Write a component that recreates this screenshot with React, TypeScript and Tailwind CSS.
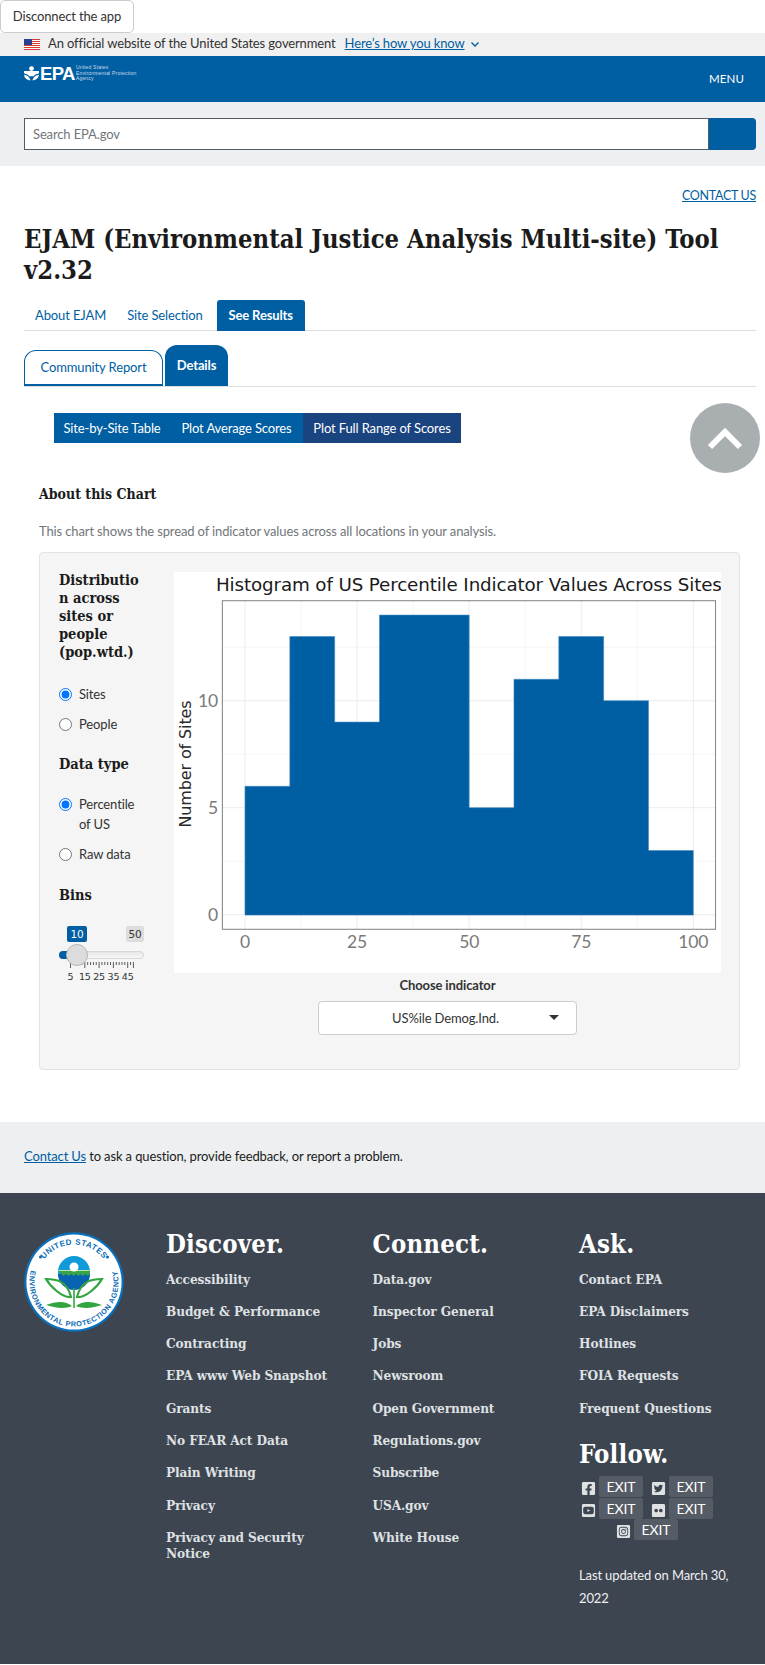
import React from "react";
import { FaFacebookSquare, FaTwitterSquare, FaYoutubeSquare, FaFlickr, FaInstagramSquare } from "react-icons/fa";

const serif = "font-['DejaVu_Serif_Condensed','DejaVu_Serif',serif] font-bold";

function Flag() {
  return (
    <svg width="16" height="11" viewBox="0 0 16 11" className="shrink-0">
      <rect width="16" height="11" fill="#fff" />
      {[0, 2, 4, 6, 8, 10].map((y) => (
        <rect key={y} y={y} width="16" height="1" fill="#d83933" />
      ))}
      <rect width="8" height="6" fill="#2a3f8f" />
    </svg>
  );
}

function EpaLogo() {
  return (
    <div className="flex items-center h-[18px]">
      <svg width="15" height="15" viewBox="0 0 15 15" className="shrink-0">
        <circle cx="7.5" cy="2.6" r="2.4" fill="#fff" />
        <path d="M0 5h15v1.4c0 1-1 1.4-2 1.6-1 .3-2.6 1-3.3 2.2h-4.4C4.600 9 3 8.300 2 8 1 7.800 0 7.400 0 6.400z" fill="#fff" />
        <path d="M0 8.800c2.600.2 5 1.600 6.700 5.500C3 14.500 .4 12 0 8.800zM15 8.800c-2.600.2-5 1.600-6.700 5.500C12 14.500 14.600 12 15 8.800z" fill="#fff" />
      </svg>
      <span className="ml-[1px] font-['Liberation_Sans',sans-serif] font-bold text-white text-[18.5px] leading-[18px] tracking-[-0.6px]">EPA</span>
      <span className="ml-[1px] font-['Liberation_Sans',sans-serif] text-[#c9dcec] text-[5px] leading-[5.400px] tracking-[0.2px]">
        United States
        <br />
        Environmental Protection
        <br />
        Agency
      </span>
    </div>
  );
}

function Seal() {
  return (
    <svg width="100" height="100" viewBox="0 0 100 100" className="shrink-0">
      <circle cx="50" cy="50" r="49.800" fill="#0a70bd" />
      <circle cx="50" cy="50" r="47.600" fill="#fff" />
      <defs>
        <path id="sealTop" d="M 12.500 50 A 37.500 37.500 0 0 1 87.500 50" />
        <path id="sealBot" d="M 11.500 27.750 A 44.500 44.500 0 1 0 88.500 27.750" />
      </defs>
      <text className="font-['Liberation_Sans',sans-serif] font-bold" fontSize="8" fill="#0a6cb5" letterSpacing="0.5" textAnchor="middle">
        <textPath href="#sealTop" startOffset="50%">UNITED STATES</textPath>
      </text>
      <text className="font-['Liberation_Sans',sans-serif] font-bold" fontSize="7.300" fill="#0a6cb5" letterSpacing="0.55" textAnchor="middle">
        <textPath href="#sealBot" startOffset="50%">ENVIRONMENTAL PROTECTION AGENCY</textPath>
      </text>
      <circle cx="16.500" cy="25" r="1.500" fill="#0a6cb5" />
      <circle cx="83.500" cy="25" r="1.500" fill="#0a6cb5" />
      <circle cx="50" cy="40" r="16" fill="#0f9ad9" />
      <path d="M34 42h32a16 16 0 0 1-32 0z" fill="#0a63b0" />
      <path d="M34.200 38.500h31.600l.2 3-2 2.500-2.500-2-2.500 2-2.500-2-2.500 2-2-2-2.500 2-2.500-2-2.500 2-2.500-2-2.500 2-2.200-2.500z" fill="#3aa447" />
      <rect x="34.300" y="38" width="31.400" height="1" fill="#bfe3a8" />
      <circle cx="50" cy="35" r="4.500" fill="#fff" />
      <path d="M49.200 56h1.600v20h-1.600z" fill="#33a540" />
      <path d="M47 65C38 66 26 54 22 47c9 0 21 1 25 18zM53 65c9 1 21-11 25-18-9 0-21 1-25 18z" fill="none" stroke="#33a540" strokeWidth="2.200" />
      <path d="M48 74c-6-5-15-5-26-1 7 2 17 5 26 1zM52 74c6-5 15-5 26-1-7 2-17 5-26 1z" fill="#33a540" />
    </svg>
  );
}

function Chart() {
  const bars = [6, 13, 9, 14, 14, 5, 11, 13, 10, 3];
  const px = (v: number) => 71 + v * 4.483;
  const py = (v: number) => 342.7 - v * 21.4;
  let d = `M${px(0)} ${py(0)}`;
  bars.forEach((b, i) => {
    d += `L${px(i * 10)} ${py(b)}L${px((i + 1) * 10)} ${py(b)}`;
  });
  d += `L${px(100)} ${py(0)}Z`;
  return (
    <svg width="547" height="401" viewBox="0 0 547 401" className="block bg-white">
      {[12.5, 37.5, 62.5, 87.5].map((v) => (
        <line key={v} x1={px(v)} x2={px(v)} y1="28.700" y2="357.300" stroke="#f4f4f4" />
      ))}
      {[2.5, 7.5, 12.5].map((v) => (
        <line key={v} y1={py(v)} y2={py(v)} x1="48.400" x2="541.500" stroke="#f4f4f4" />
      ))}
      {[0, 25, 50, 75, 100].map((v) => (
        <line key={v} x1={px(v)} x2={px(v)} y1="28.700" y2="357.300" stroke="#ececec" />
      ))}
      {[0, 5, 10].map((v) => (
        <line key={v} y1={py(v)} y2={py(v)} x1="48.400" x2="541.500" stroke="#ececec" />
      ))}
      <path d={d} fill="#005ea2" stroke="#3f8ac2" strokeWidth="0.600" />
      <path d={`M${px(0)} ${py(0)}H${px(100)}`} stroke="#005ea2" strokeWidth="1" />
      <rect x="48.400" y="28.700" width="493.100" height="328.600" fill="none" stroke="#8c8c8c" strokeWidth="1.100" />
      <text x="42" y="19" fontSize="18.300" fill="#1a1a1a" className="font-['DejaVu_Sans',sans-serif]">Histogram of US Percentile Indicator Values Across Sites</text>
      <text transform="translate(16.500 192) rotate(-90)" textAnchor="middle" fontSize="16" fill="#2a2a2a" className="font-['DejaVu_Sans',sans-serif]">Number of Sites</text>
      {[0, 25, 50, 75, 100].map((v) => (
        <text key={v} x={px(v)} y="375.500" textAnchor="middle" fontSize="17.500" fill="#7a7a7a" className="font-['Lato',sans-serif]">{v}</text>
      ))}
      {[0, 5, 10].map((v) => (
        <text key={v} x="44" y={py(v) + 6} textAnchor="end" fontSize="17.500" fill="#7a7a7a" className="font-['Lato',sans-serif]">{v}</text>
      ))}
    </svg>
  );
}

function Radio({ label, checked, name }: { label: React.ReactNode; checked?: boolean; name: string }) {
  return (
    <label className="flex items-start text-[13px] tracking-[-0.13px] leading-[20px] text-[#333]">
      <input type="radio" name={name} defaultChecked={checked} className="w-[13px] h-[13px] mt-[4px] ml-0 mr-[7px] shrink-0" />
      <span>{label}</span>
    </label>
  );
}

function Slider() {
  const ticks = Array.from({ length: 23 }, (_, i) => i);
  return (
    <div className="w-[90px] mt-[21px]">
      <div className="flex justify-between w-[85px] pl-[8px] h-[16px]">
        <span className="w-[20px] h-[16px] bg-[#005ea2] rounded-[2px] text-white text-[10.500px] leading-[16px] text-center font-['DejaVu_Sans',sans-serif]">10</span>
        <span className="w-[18px] h-[16px] bg-[#dddddd] rounded-[2px] text-[#333] text-[10.500px] leading-[16px] text-center font-['DejaVu_Sans',sans-serif]">50</span>
      </div>
      <div className="relative w-[85px] h-[8px] mt-[9px] rounded-[4px] border border-[#d8d8d8] bg-gradient-to-b from-[#e6e6e6] to-[#f8f8f8]">
        <div className="absolute -left-px -top-px w-[16px] h-[8px] rounded-l-[4px] bg-[#005ea2]" />
        <div className="absolute left-[6px] top-[-8px] w-[22px] h-[22px] rounded-full bg-[#dcdcdc] border border-[#b5b5b5]" />
      </div>
      <svg width="90" height="24" viewBox="0 0 90 24" className="block mt-[2px]">
        {ticks.map((i) => {
          const x = 11.500 + i * 2.860;
          const major = i % 5 === 0 || i === 22;
          return <line key={i} x1={x} x2={x} y1="1" y2={major ? 7 : 4} stroke="#333" strokeWidth="0.800" />;
        })}
        {[5, 15, 25, 35, 45].map((v, i) => (
          <text key={v} x={11.500 + i * 14.300} y="19" textAnchor="middle" fontSize="9.500" fill="#333" className="font-['DejaVu_Sans',sans-serif]">{v}</text>
        ))}
      </svg>
    </div>
  );
}

const discover = ["Accessibility", "Budget & Performance", "Contracting", "EPA www Web Snapshot", "Grants", "No FEAR Act Data", "Plain Writing", "Privacy", "Privacy and Security Notice"];
const connect = ["Data.gov", "Inspector General", "Jobs", "Newsroom", "Open Government", "Regulations.gov", "Subscribe", "USA.gov", "White House"];
const ask = ["Contact EPA", "EPA Disclaimers", "Hotlines", "FOIA Requests", "Frequent Questions"];

function LinkCol({ title, links, width }: { title: string; links: string[]; width: string }) {
  return (
    <div className={width}>
      <h2 className={`${serif} text-white text-[25.500px] leading-[30px] tracking-[0.2px]`}>{title}</h2>
      <ul className="mt-[12px] flex flex-col gap-[16.300px]">
        {links.map((l) => (
          <li key={l} className={`${serif} text-[#dfe1e2] text-[13.500px] tracking-[-0.1px] leading-[16px] pr-[30px]`}>{l}</li>
        ))}
      </ul>
    </div>
  );
}

function Exit() {
  return <span className="w-[44px] h-[21px] rounded-[2px] bg-[#565c65] text-white text-[14px] tracking-[-0.13px] leading-[21px] text-center">EXIT</span>;
}

export default function App() {
  return (
    <div className="w-[765px] min-h-[1665px] bg-white font-['Lato',sans-serif] text-[13px] tracking-[-0.13px] text-[#1b1b1b]">
      <button className="block w-[134px] h-[32.500px] bg-white border border-[#cccccc] rounded-[5px] text-[13px] tracking-[-0.13px] text-[#333]">Disconnect the app</button>
      <div className="h-[23px] bg-[#f0f0f0] flex items-center pl-[24px]">
        <Flag />
        <span className="ml-[8px] text-[#333]">An official website of the United States government</span>
        <a className="ml-[9px] text-[#005ea2] underline">Here’s how you know</a>
        <svg width="10" height="10" viewBox="0 0 10 10" className="ml-[5px]">
          <path d="M1.500 3.500 5 7l3.500-3.500" fill="none" stroke="#005ea2" strokeWidth="1.400" />
        </svg>
      </div>
      <header className="h-[46px] bg-[#005ea2] flex justify-between pl-[24px] pr-[21px]">
        <div className="mt-[9px]"><EpaLogo /></div>
        <span className="mt-[15px] text-white text-[11.500px] leading-[16px] tracking-[0.1px]">MENU</span>
      </header>
      <div className="h-[64px] bg-[#edeff0] pl-[24px] pr-[9px] pt-[16px]">
        <div className="flex h-[32px]">
          <input placeholder="Search EPA.gov" className="flex-1 min-w-0 h-full bg-white border border-[#565c65] px-[8px] text-[13px] placeholder:text-[#71767a]" />
          <button className="w-[47px] h-full bg-[#005ea2] rounded-r-[4px]" aria-label="Search" />
        </div>
      </div>

      <main className="pl-[24px] pr-[9px]">
        <div className="pt-[22px] text-right text-[12.500px] tracking-[-0.3px] leading-[16px]">
          <a className="text-[#005ea2] underline">CONTACT US</a>
        </div>
        <h1 className={`${serif} mt-[20px] text-[25.400px] tracking-normal leading-[31px] text-[#1b1b1b]`}>EJAM (Environmental Justice Analysis Multi-site) Tool v2.32</h1>
        <div className="mt-[14px] flex h-[31px] border-b border-[#dcdee0]">
          <a className="ml-[11px] leading-[30px] text-[#005ea2]">About EJAM</a>
          <a className="ml-[21px] leading-[30px] text-[#005ea2]">Site Selection</a>
          <a className="ml-[14px] w-[88px] h-[31px] rounded-t-[3px] bg-[#005ea2] text-white font-bold leading-[30px] text-center">See Results</a>
        </div>
        <div className="mt-[15px] flex items-end h-[41px] border-b border-[#dcdee0]">
          <a className="w-[139px] h-[36px] rounded-t-[12px] border border-b-2 border-[#005ea2] bg-white text-[#005ea2] leading-[32px] text-center">Community Report</a>
          <a className="ml-[2px] w-[63px] h-[41px] rounded-t-[12px] bg-[#005ea2] text-white font-bold leading-[40px] text-center">Details</a>
        </div>
        <div className="relative">
          <div className="ml-[30px] mt-[26px] inline-flex h-[30px] text-white leading-[30px]">
            <a className="w-[116px] bg-[#005ea2] text-center">Site-by-Site Table</a>
            <a className="w-[133px] bg-[#005ea2] text-center">Plot Average Scores</a>
            <a className="w-[158px] bg-[#1a4480] text-center">Plot Full Range of Scores</a>
          </div>
          <div className="absolute left-[666px] top-[16px] w-[70px] h-[70px] rounded-full bg-[#a9aeb1] flex items-center justify-center">
            <svg width="36" height="24" viewBox="0 0 36 24">
              <path d="M3 21 18 6l15 15" fill="none" stroke="#fff" strokeWidth="6" />
            </svg>
          </div>
        </div>
        <div className="pl-[15px]">
          <h3 className={`${serif} mt-[41px] text-[14px] tracking-normal leading-[20px] text-[#1b1b1b]`}>About this Chart</h3>
          <p className="mt-[17px] leading-[20px] text-[#71767a]">This chart shows the spread of indicator values across all locations in your analysis.</p>
        </div>
        <section className="ml-[15px] mr-[16px] mt-[11px] h-[518px] bg-[#f5f5f5] border border-[#e3e3e3] rounded-[4px] pt-[18px] pl-[19px]">
          <div className="flex">
            <div className="w-[115px] shrink-0">
              <div className={`${serif} w-[85px] break-words text-[14.500px] tracking-normal leading-[18px] text-[#1b1b1b]`}>Distribution across sites or people (pop.wtd.)</div>
              <div className="mt-[23px] flex flex-col gap-[10px]">
                <Radio name="a" checked label="Sites" />
                <Radio name="a" label="People" />
              </div>
              <div className={`${serif} mt-[20px] text-[14.500px] tracking-normal leading-[20px] text-[#1b1b1b]`}>Data type</div>
              <div className="mt-[20px] flex flex-col gap-[10px]">
                <Radio name="b" checked label={<>Percentile<br />of US</>} />
                <Radio name="b" label="Raw data" />
              </div>
              <div className={`${serif} mt-[21px] text-[14.500px] tracking-normal leading-[20px] text-[#1b1b1b]`}>Bins</div>
              <Slider />
            </div>
            <div className="w-[547px] mt-[1px]">
              <Chart />
              <div className="w-[547px] text-center">
                <div className="mt-[3px] font-bold leading-[18px] text-[#333]">Choose indicator</div>
                <div className="relative mx-auto mt-[7px] w-[259px] h-[34px] bg-white border border-[#cccccc] rounded-[4px] leading-[32px] text-[#333]">
                  <span className="block pr-[4px]">US%ile Demog.Ind.</span>
                  <span className="absolute right-[17px] top-[13px] w-0 h-0 border-x-[5px] border-x-transparent border-t-[5px] border-t-[#333]" />
                </div>
              </div>
            </div>
          </div>
        </section>
      </main>

      <div className="mt-[52px] h-[71px] bg-[#edeff0] px-[24px] flex items-center text-[#1b1b1b]">
        <span><a className="text-[#005ea2] underline">Contact Us</a> to ask a question, provide feedback, or report a problem.</span>
      </div>

      <footer className="h-[471px] bg-[#3d4551] pl-[24px] pt-[36px] flex">
        <div className="w-[142px] shrink-0 pt-[3px]"><Seal /></div>
        <LinkCol title="Discover." links={discover} width="w-[206.500px]" />
        <LinkCol title="Connect." links={connect} width="w-[206.500px]" />
        <div className="w-[186px]">
          <LinkCol title="Ask." links={ask} width="w-full" />
          <h2 className={`${serif} mt-[23px] text-white text-[25.500px] tracking-[0.2px] leading-[30px]`}>Follow.</h2>
          <div className="mt-[7px] w-[136px] flex flex-col items-center text-[#dfe1e2]">
            <div className="flex items-center h-[21px]">
              <FaFacebookSquare size={15} className="mt-[4px] mr-[3px]" /><Exit />
              <FaTwitterSquare size={15} className="mt-[4px] ml-[8px] mr-[3px]" /><Exit />
            </div>
            <div className="flex items-center h-[21px] mt-[1px]">
              <FaYoutubeSquare size={15} className="mt-[4px] mr-[3px]" /><Exit />
              <FaFlickr size={15} className="mt-[4px] ml-[8px] mr-[3px]" /><Exit />
            </div>
            <div className="flex items-center h-[21px]">
              <FaInstagramSquare size={15} className="mt-[4px] mr-[3px]" /><Exit />
            </div>
          </div>
          <p className="mt-[24px] w-[160px] leading-[23px] text-[#f0f0f0]">Last updated on March 30, 2022</p>
        </div>
      </footer>
    </div>
  );
}
